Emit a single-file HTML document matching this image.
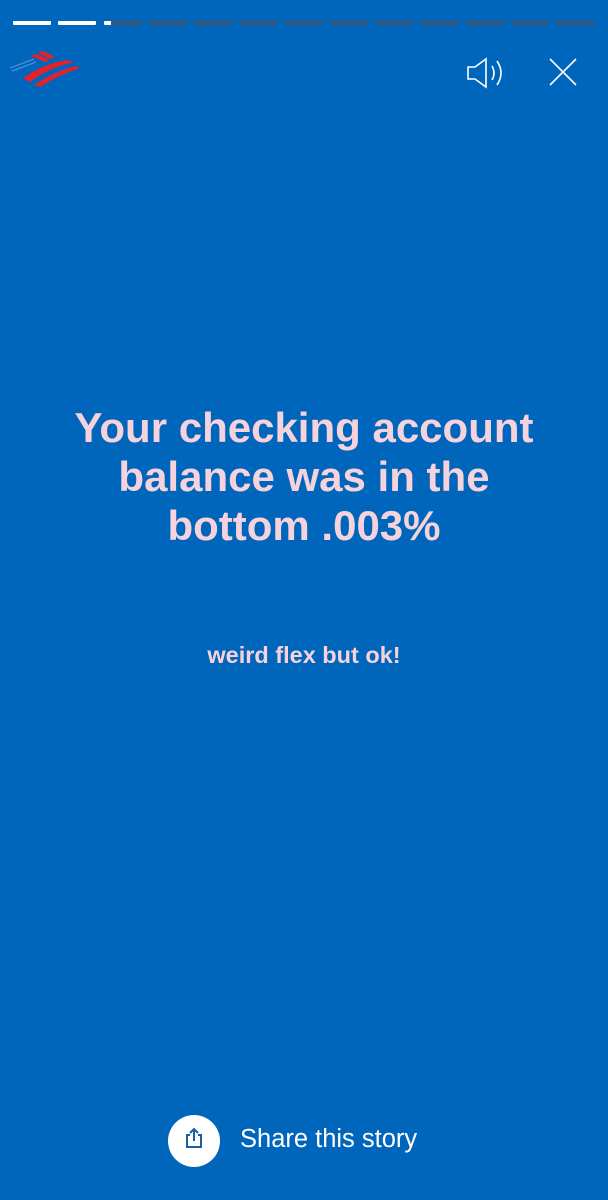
<!DOCTYPE html>
<html><head><style>
body{margin:0;width:608px;height:1200px;background:#0066bb;position:relative;overflow:hidden;font-family:"Liberation Sans",Arial,sans-serif}
.bar{position:absolute;top:21px;height:4px;width:38px;background:#3b5674;border-radius:1px}
.t{position:absolute;left:0;width:608px;text-align:center;color:#f6d3dc;font-weight:bold}
</style></head><body>
<div class="bar" style="left:13px;background:#fff"></div>
<div class="bar" style="left:58px;background:#fff"></div>
<div class="bar" style="left:104px;background:linear-gradient(90deg,#fff 0 7px,#3b5674 7px)"></div>
<div class="bar" style="left:149px"></div><div class="bar" style="left:194px"></div>
<div class="bar" style="left:239px"></div><div class="bar" style="left:285px"></div>
<div class="bar" style="left:330px"></div><div class="bar" style="left:375px"></div>
<div class="bar" style="left:420px"></div><div class="bar" style="left:466px"></div>
<div class="bar" style="left:511px"></div><div class="bar" style="left:556px"></div>
<svg style="position:absolute;left:0;top:45px" width="90" height="55" viewBox="0 0 90 55">
<path d="M10 23 L34 14 M12 26 L36 17" stroke="#5b95d8" stroke-width="1"/>
<path d="M31 11 L36 9 L50 15 L45 17Z M38 8 L43 6 L55 12 L50 14Z" fill="#e8202a"/>
<path d="M23 33 Q45 18 68 15 L74 17 Q50 22 30 37Z" fill="#e8202a"/>
<path d="M34 40 Q55 26 76 21 L80 23 Q58 30 40 42Z" fill="#e8202a"/>
</svg>
<svg style="position:absolute;left:465px;top:56px" width="44" height="34" viewBox="0 0 44 34" fill="none" stroke="#fff" stroke-width="1.6">
<path d="M3 11 H10 L21 3 V31 L10 23 H3Z"/><path d="M27 10 Q31 17 27 24"/><path d="M32 5 Q40 17 32 29"/>
</svg>
<svg style="position:absolute;left:548px;top:57px" width="30" height="30" viewBox="0 0 30 30" stroke="#fff" stroke-width="1.6"><path d="M2 2L28 28M28 2L2 28"/></svg>
<div class="t" style="top:403px;font-size:42px;line-height:49px">Your checking account<br>balance was in the<br>bottom .003%</div>
<div class="t" style="top:642px;font-size:23.5px">weird flex but ok!</div>
<div style="position:absolute;left:168px;top:1115px;width:52px;height:52px;border-radius:50%;background:#fff"></div>
<svg style="position:absolute;left:183px;top:1126px" width="22" height="24" viewBox="0 0 22 24" fill="none" stroke="#1a5fa5" stroke-width="2"><path d="M7 9H4V21H18V9H15"/><path d="M11 15V3M7 7L11 3L15 7"/></svg>
<div style="position:absolute;left:240px;top:1125px;color:#fff;font-size:25.5px">Share this story</div>
</body></html>
